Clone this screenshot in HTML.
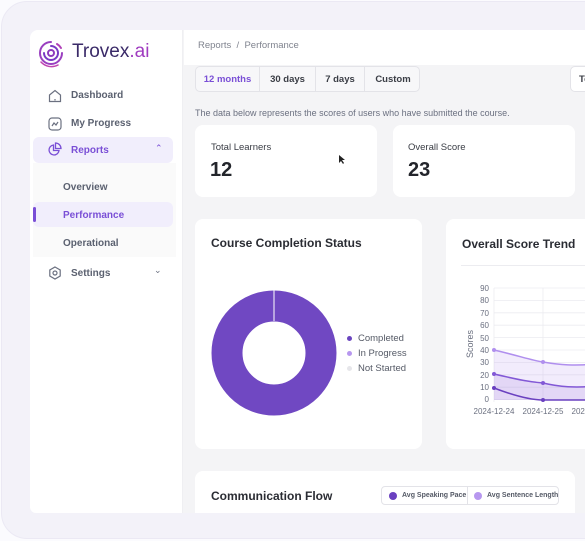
<!DOCTYPE html>
<html><head><meta charset="utf-8"><style>
*{box-sizing:border-box;margin:0;padding:0}
body{width:585px;height:541px;overflow:hidden;background:#fbfbfe;font-family:"Liberation Sans",sans-serif;position:relative}
.frame{position:absolute;left:1px;top:1px;width:620px;height:538px;border-radius:26px;background:#f3f2f9;border:1px solid #ebe9f4}
.screen{position:absolute;left:30px;top:30px;width:560px;height:483px;background:#f4f4f6;border-radius:8px 0 0 6px;overflow:hidden}
.side{position:absolute;left:0;top:0;width:153px;height:483px;background:#fff;border-right:1px solid #efeff2}
.a{position:absolute;white-space:nowrap}
.nav{font-size:10px;font-weight:bold;color:#5b6170}
.card{position:absolute;background:#fff;border-radius:8px}
.tab{position:absolute;top:0;height:26px;line-height:26px;font-size:9.5px;font-weight:bold;color:#3a3d45;text-align:center;border-right:1px solid #e3e3e8}
</style></head><body>
<div class="frame"></div>
<div class="screen">
 <div class="side">
  <svg class="a" style="left:6px;top:8px" width="30" height="30" viewBox="0 0 30 30" fill="none" stroke-linecap="round">
   <circle cx="15" cy="15" r="3" stroke="#8e3bbd" stroke-width="2"/>
   <path d="M15 8 A7 7 0 1 1 8 15" stroke="#7a3bc4" stroke-width="2"/>
   <path d="M15 4 A11 11 0 1 0 26 15" stroke="#9a3fc0" stroke-width="2"/>
   <path d="M21 6 A11 11 0 0 1 25 10" stroke="#b040b8" stroke-width="2"/>
   <path d="M5 24 A14 14 0 0 0 22 27" stroke="#c044b0" stroke-width="1.5"/>
  </svg>
  <div class="a" style="left:42px;top:11px;font-size:19px;color:#3a2a68">Trovex<span style="color:#a03cc0">.ai</span></div>
  <svg class="a" style="left:18px;top:59px" width="14" height="14" viewBox="0 0 14 14" fill="none" stroke="#6b7080" stroke-width="1.2"><path d="M1.5 6 L7 1.5 L12.5 6 V12.5 H1.5 Z"/><path d="M7 10v1.5"/></svg>
  <div class="a nav" style="left:41px;top:60px">Dashboard</div>
  <svg class="a" style="left:18px;top:87px" width="14" height="14" viewBox="0 0 14 14" fill="none" stroke="#6b7080" stroke-width="1.2"><rect x="1" y="1" width="12" height="12" rx="3"/><path d="M4 9l2-3 2 2 2-3"/></svg>
  <div class="a nav" style="left:41px;top:88px">My Progress</div>
  <div class="a" style="left:3px;top:107px;width:140px;height:26px;background:#f1eefc;border-radius:6px"></div>
  <svg class="a" style="left:17px;top:112px" width="15" height="15" viewBox="0 0 15 15" fill="none" stroke="#7a4fd6" stroke-width="1.3"><path d="M6.5 3 A5 5 0 1 0 12 8.5 H6.5 Z"/><path d="M8.5 1 A5.5 5.5 0 0 1 14 6.5 H8.5 Z"/></svg>
  <div class="a nav" style="left:41px;top:115px;color:#7a4fd6">Reports</div>
  <div class="a" style="left:125px;top:113px;font-size:9px;color:#7a4fd6">&#8963;</div>
  <div class="a" style="left:3px;top:133px;width:143px;height:94px;background:#fafafa"></div>
  <div class="a nav" style="left:33px;top:152px">Overview</div>
  <div class="a" style="left:3px;top:172px;width:140px;height:25px;background:#f1eefc;border-radius:6px"></div>
  <div class="a" style="left:3px;top:177px;width:3px;height:15px;background:#7a4fd6;border-radius:2px"></div>
  <div class="a nav" style="left:33px;top:180px;color:#7a4fd6">Performance</div>
  <div class="a nav" style="left:33px;top:208px">Operational</div>
  <svg class="a" style="left:18px;top:236px" width="14" height="14" viewBox="0 0 14 14" fill="none" stroke="#6b7080" stroke-width="1.2"><path d="M7 1 L12.2 4 V10 L7 13 L1.8 10 V4 Z"/><circle cx="7" cy="7" r="2"/></svg>
  <div class="a nav" style="left:41px;top:238px">Settings</div>
  <div class="a" style="left:124px;top:235px;font-size:9px;color:#6b7080">&#8964;</div>
 </div>
 <div class="a" style="left:154px;top:0;width:410px;height:35px;background:#fff"></div>
 <div class="a" style="left:168px;top:10px;font-size:9.5px;color:#80848f">Reports &nbsp;/ &nbsp;Performance</div>
 <div class="a" style="left:165px;top:36px;width:225px;height:26px;background:#f7f7f9;border:1px solid #e3e3e8;border-radius:5px;overflow:hidden">
  <div class="tab" style="left:0;width:64px;color:#7a4fd6">12 months</div>
  <div class="tab" style="left:64px;width:56px">30 days</div>
  <div class="tab" style="left:120px;width:49px">7 days</div>
  <div class="tab" style="left:169px;width:56px;border:none">Custom</div>
 </div>
 <div class="a" style="left:540px;top:36px;width:30px;height:26px;background:#fff;border:1px solid #e3e3e8;border-radius:5px;font-size:9.5px;font-weight:bold;padding:7px 0 0 8px;color:#3a3d45">Te</div>
 <div class="a" style="left:165px;top:78px;font-size:9px;color:#6b7080">The data below represents the scores of users who have submitted the course.</div>
 <div class="card" style="left:165px;top:95px;width:182px;height:72px">
  <div class="a" style="left:16px;top:17px;font-size:9.5px;color:#3a3d45">Total Learners</div>
  <div class="a" style="left:15px;top:34px;font-size:20px;font-weight:bold;color:#23252b">12</div>
  <svg class="a" style="left:143px;top:29px" width="8" height="11" viewBox="0 0 8 11"><path d="M1 1v8l2-2 2 3 1-1-2-3h3z" fill="#222"/></svg>
 </div>
 <div class="card" style="left:363px;top:95px;width:182px;height:72px">
  <div class="a" style="left:15px;top:17px;font-size:9.5px;color:#3a3d45">Overall Score</div>
  <div class="a" style="left:15px;top:34px;font-size:20px;font-weight:bold;color:#23252b">23</div>
 </div>
 <div class="card" style="left:165px;top:189px;width:227px;height:230px">
  <div class="a" style="left:16px;top:17px;font-size:12px;font-weight:bold;color:#2a2c33">Course Completion Status</div>
  <svg class="a" style="left:16px;top:71px" width="126" height="126" viewBox="0 0 126 126"><circle cx="63" cy="63" r="47" fill="none" stroke="#7048c2" stroke-width="31"/><line x1="63" y1="0" x2="63" y2="31" stroke="#fff" stroke-width="1"/></svg>
  <div class="a" style="left:152px;top:112px;font-size:9.5px;color:#555a66;line-height:15px">
   <div><span style="display:inline-block;width:5px;height:5px;border-radius:50%;background:#6a45bf;margin-right:6px;vertical-align:middle"></span>Completed</div>
   <div><span style="display:inline-block;width:5px;height:5px;border-radius:50%;background:#b797ef;margin-right:6px;vertical-align:middle"></span>In Progress</div>
   <div><span style="display:inline-block;width:5px;height:5px;border-radius:50%;background:#e6e6ea;margin-right:6px;vertical-align:middle"></span>Not Started</div>
  </div>
 </div>
 <div class="card" style="left:416px;top:189px;width:160px;height:230px">
  <div class="a" style="left:16px;top:18px;font-size:12px;font-weight:bold;color:#2a2c33">Overall Score Trend</div>
  <div class="a" style="left:15px;top:46px;width:150px;height:1px;background:#ececf0"></div>
 </div>
 <svg class="a" style="left:416px;top:250px" width="150" height="140" viewBox="416 250 150 140" font-family="Liberation Sans" font-size="8" fill="#6b7080">
  <g stroke="#ececf0" stroke-width="0.8">
   <line x1="464" x2="566" y1="258" y2="258"/><line x1="464" x2="566" y1="270.4" y2="270.4"/><line x1="464" x2="566" y1="282.8" y2="282.8"/><line x1="464" x2="566" y1="295.2" y2="295.2"/><line x1="464" x2="566" y1="307.6" y2="307.6"/><line x1="464" x2="566" y1="320" y2="320"/><line x1="464" x2="566" y1="332.4" y2="332.4"/><line x1="464" x2="566" y1="344.8" y2="344.8"/><line x1="464" x2="566" y1="357.2" y2="357.2"/><line x1="464" x2="566" y1="369.6" y2="369.6"/>
   <line x1="464" x2="464" y1="258" y2="372"/><line x1="513" x2="513" y1="258" y2="372"/><line x1="562" x2="562" y1="258" y2="372"/>
  </g>
  <g text-anchor="end"><text x="459" y="261">90</text><text x="459" y="273">80</text><text x="459" y="286">70</text><text x="459" y="298">60</text><text x="459" y="311">50</text><text x="459" y="323">40</text><text x="459" y="335">30</text><text x="459" y="348">20</text><text x="459" y="360">10</text><text x="459" y="372">0</text></g>
  <text transform="translate(443,314) rotate(-90)" text-anchor="middle" font-size="9">Scores</text>
  <text x="464" y="384" text-anchor="middle">2024-12-24</text><text x="513" y="384" text-anchor="middle">2024-12-25</text><text x="562" y="384" text-anchor="middle">2024-12-26</text>
  <path d="M464 320 C490 326 500 330 513 332 C530 335 545 336 566 334 L566 370 L464 370Z" fill="#b798ef" opacity="0.18"/>
  <path d="M464 344 C490 350 500 352 513 353 C530 357 545 358 566 356 L566 370 L464 370Z" fill="#8a63d8" opacity="0.15"/>
  <path d="M464 320 C490 326 500 330 513 332 C530 335 545 336 566 334" fill="none" stroke="#b08fee" stroke-width="1.5"/>
  <path d="M464 344 C490 350 500 352 513 353 C530 357 545 358 566 356" fill="none" stroke="#8258d6" stroke-width="1.5"/>
  <path d="M464 358 C485 366 500 370 513 370 L566 370" fill="none" stroke="#6a40c0" stroke-width="1.5"/>
  <circle cx="464" cy="320" r="2" fill="#b08fee"/><circle cx="513" cy="332" r="2" fill="#b08fee"/>
  <circle cx="464" cy="344" r="2" fill="#8258d6"/><circle cx="513" cy="353" r="2" fill="#8258d6"/>
  <circle cx="464" cy="358" r="2" fill="#6a40c0"/><circle cx="513" cy="370" r="2" fill="#6a40c0"/>
 </svg>
 <div class="card" style="left:165px;top:441px;width:380px;height:60px">
  <div class="a" style="left:16px;top:18px;font-size:12px;font-weight:bold;color:#2a2c33">Communication Flow</div>
  <div class="a" style="left:186px;top:15px;width:178px;height:19px;border:1px solid #e3e3e8;border-radius:4px;font-size:7px;font-weight:bold;color:#555a66">
   <div class="a" style="left:7px;top:5px;width:8px;height:8px;border-radius:50%;background:#6a40c0"></div>
   <div class="a" style="left:20px;top:5px">Avg Speaking Pace</div>
   <div class="a" style="left:85px;top:0;width:1px;height:17px;background:#e3e3e8"></div>
   <div class="a" style="left:92px;top:5px;width:8px;height:8px;border-radius:50%;background:#b797ef"></div>
   <div class="a" style="left:105px;top:5px">Avg Sentence Length</div>
  </div>
 </div>
</div>
</body></html>
